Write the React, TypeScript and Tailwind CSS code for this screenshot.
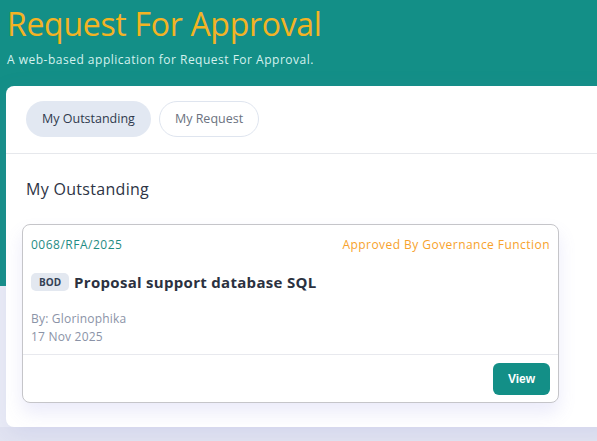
import React from "react";

export default function App() {
  const poppins = { fontFamily: '"Open Sans", "Noto Sans", sans-serif' };
  return (
    <div className="relative w-[597px] h-[441px] overflow-hidden bg-[#e3e5f2]" style={poppins}>
      <div className="absolute inset-x-0 top-0 h-[286px] bg-[#138f87]" />
      <div className="absolute left-0 top-[286px] w-[40px] h-[141px] bg-[#eceef7]" />
      <div className="relative flex flex-col">
        <div className="pl-[7px] pt-[4px] h-[86px]">
          <h1 className="text-[32px] leading-[40px] text-[#f3b324] tracking-[-0.3px]">
            Request For Approval
          </h1>
          <p className="text-[12px] leading-[16px] mt-[8px] text-[#d5f1ee] tracking-[0.5px]">
            A web-based application for Request For Approval.
          </p>
        </div>
        <div className="ml-[6px] mr-[-20px] h-[341px] bg-white rounded-l-[8px] shadow-[0_8px_24px_rgba(120,130,200,0.15)]">
          <div className="flex gap-[8px] px-[20px] pt-[15px] pb-[16px] border-b border-[#e6e8ec]">
            <button className="h-[36px] px-[16px] rounded-full bg-[#e2e8f2] text-[12.5px] text-[#2f3a4d]">
              My Outstanding
            </button>
            <button className="h-[36px] px-[15px] rounded-full border border-[#dfe5ef] bg-white text-[12.5px] text-[#6b7280]">
              My Request
            </button>
          </div>
          <div className="pl-[20px] pt-[25px] text-[16px] leading-[20px] tracking-[0.3px] text-[#2d3445]">My Outstanding</div>
          <div className="ml-[16px] mt-[25px] w-[537px] h-[179px] rounded-[8px] border border-[#c5c5c9] bg-white shadow-[0_10px_18px_rgba(110,110,220,0.14)] flex flex-col">
            <div className="flex justify-between items-center px-[8px] pt-[12px]">
              <span className="text-[12px] leading-[16px] tracking-[0.5px] text-[#1f8c84]">0068/RFA/2025</span>
              <span className="text-[12px] leading-[16px] tracking-[0.45px] font-medium text-[#f7a22b]">Approved By Governance Function</span>
            </div>
            <div className="flex items-center gap-[5px] px-[8px] mt-[19px]">
              <span className="h-[18px] px-[8px] rounded-[5px] bg-[#e3e8f0] text-[10px] leading-[18px] font-bold text-[#334155]">BOD</span>
              <span className="text-[15px] leading-[20px] font-bold tracking-[0.3px] text-[#2b3140]">Proposal support database SQL</span>
            </div>
            <div className="px-[8px] mt-[18px] text-[12px] leading-[18px] tracking-[0.2px] text-[#8b93a7]">
              <div>By: Glorinophika</div>
              <div>17 Nov 2025</div>
            </div>
            <div className="mt-[8px] border-t border-[#e8e9ee] flex justify-end px-[8px] pt-[8px]">
              <button className="h-[32px] w-[57px] rounded-[6px] bg-[#138f87] text-white text-[12px] font-semibold" style={{ fontFamily: '"Liberation Sans", Arial, sans-serif' }}>
                View
              </button>
            </div>
          </div>
        </div>
      </div>
    </div>
  );
}
